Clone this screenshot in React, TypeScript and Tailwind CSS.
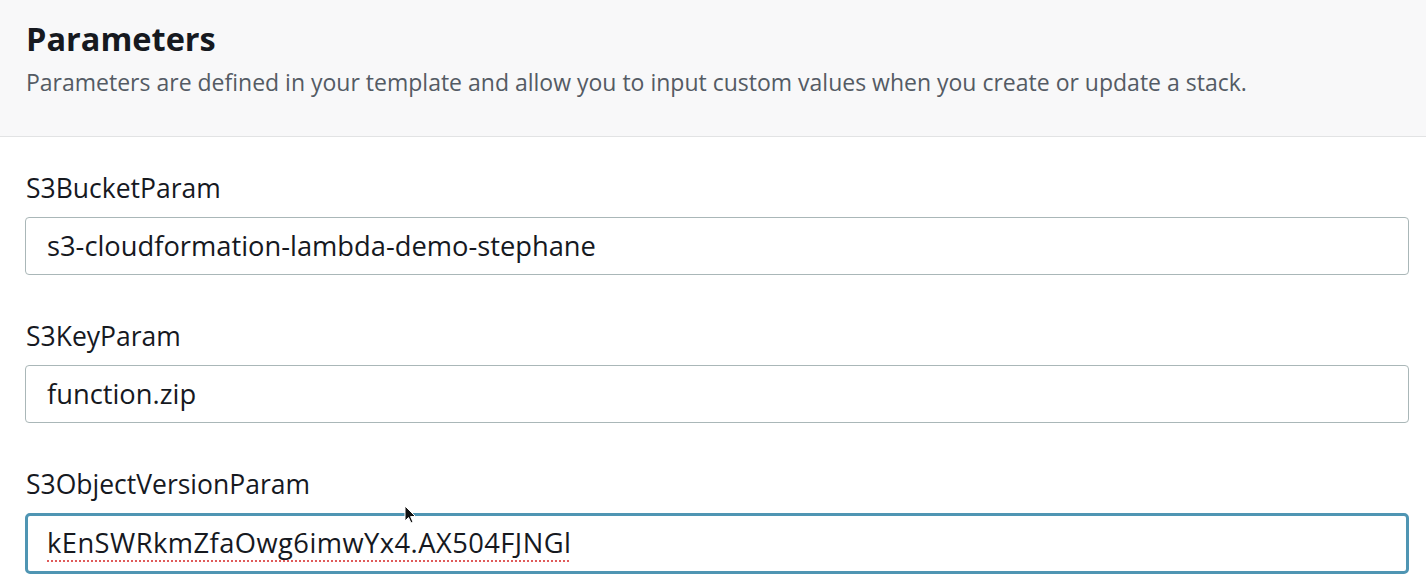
const fields = [
  { label: "S3BucketParam", value: "s3-cloudformation-lambda-demo-stephane", focused: false },
  { label: "S3KeyParam", value: "function.zip", focused: false },
  { label: "S3ObjectVersionParam", value: "kEnSWRkmZfaOwg6imwYx4.AX504FJNGl", focused: true },
];

function Cursor() {
  return (
    <svg className="absolute left-[379px] top-[-8px]" width="14" height="20" viewBox="0 0 14 20">
      <path d="M1 1 L1 16 L4.5 12.5 L7 18 L9 17 L6.6 11.6 L11.5 11.5 Z" fill="#111" stroke="#fff" strokeWidth="1" />
    </svg>
  );
}

export default function App() {
  return (
    <div className="w-[1426px] h-[588px] overflow-hidden bg-white font-['Open_Sans',sans-serif]">
      {/* Header */}
      <div className="bg-[#f8f8f9] border-b border-[#e2e3e4] px-[26px] pt-[18px] h-[137px]">
        <h2 className="text-[32.5px] leading-[42px] font-bold text-[#16191f]">Parameters</h2>
        <p className="mt-[7px] text-[23px] leading-[30px] text-[#545b64]">
          Parameters are defined in your template and allow you to input custom values when you create or update a stack.
        </p>
      </div>

      {/* Fields */}
      <div className="pl-[25px] pr-[17px] pt-[34px] flex flex-col gap-[44px]">
        {fields.map((f) => (
          <div key={f.label} className="flex flex-col">
            <label className="text-[26.5px] leading-[34px] text-[#16191f] pl-[1px]">{f.label}</label>
            <div className="relative mt-[12px]">
              {f.focused && <Cursor />}
              <div
                className={
                  f.focused
                    ? "h-[61px] rounded-[5px] border-[3px] border-[#4f95b3] flex items-center px-[19px]"
                    : "h-[58px] rounded-[4px] border border-[#aab7b8] flex items-center px-[21px]"
                }
              >
                <span
                  className={
                    f.focused
                      ? "text-[27.3px] tracking-[0.45px] text-[#16191f] underline decoration-dotted decoration-[#e05a5a] decoration-2 underline-offset-[7px]"
                      : "text-[27.3px] text-[#16191f]"
                  }
                >
                  {f.value}
                </span>
              </div>
            </div>
          </div>
        ))}
      </div>
    </div>
  );
}
